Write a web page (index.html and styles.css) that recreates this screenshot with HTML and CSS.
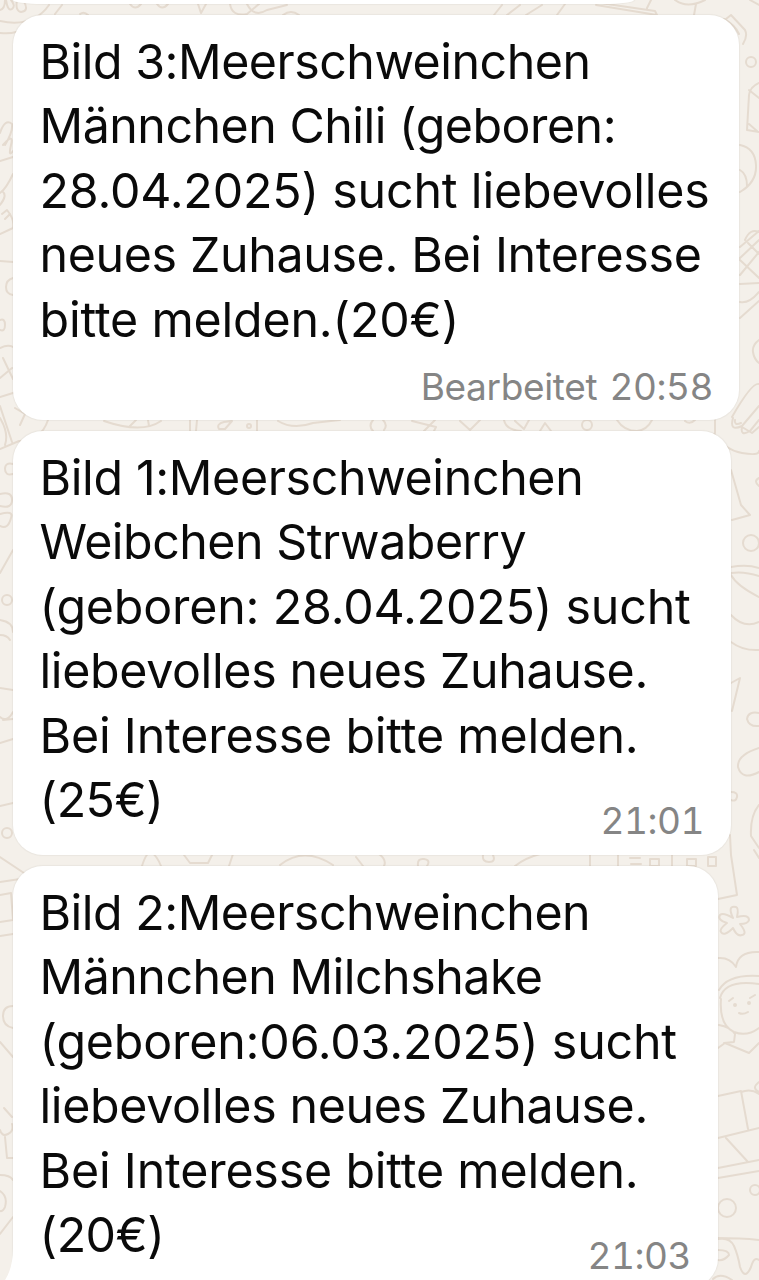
FILE: index.html
```
<!DOCTYPE html>
<html lang="de">
  <head>
    <meta charset="utf-8" />
    <title>Chat</title>
    <link rel="stylesheet" href="styles.css">
  </head>

  <body>
    <svg class="wallpaper" viewBox="0 0 759 1280" aria-hidden="true">
      <!-- left edge -->
      <path d="M0 10Q5 9 5 0M6 0Q8 12 12 9T11 0M17 0Q15 11 21 12Q30 11 23 0M0 21Q33 28 49 5M0 33Q10 34 16 32M55 14L62 5" />
      <path d="M0 133Q5 118 12 124Q13 132 5 145M3 145Q14 132 11 145T13 151M0 161L13 157M13 174Q6 189 0 193M0 205Q8 195 2 191M2 214L7 210Q15 220 13 228L0 234M5 219L10 214M0 261L13 262M13 278Q6 280 6 287Q6 294 13 295M0 320Q5 318 5 325T0 330" />
      <path d="M0 348Q8 344 13 347M3 358L13 379M0 378L12 368M0 397L13 393M0 406L12 442M0 418Q9 433 5 445M0 449L19 441Q41 441 48 420M15 408L25 414L20 425M13 464Q5 462 5 469T13 474M0 494Q12 491 12 500T0 506M0 514Q14 510 11 518Q8 530 0 526M0 573L13 550M0 620Q13 622 13 632M0 635Q7 635 10 640" />
      <circle cx="7" cy="600" r="5" />
      <path d="M0 688L13 690M0 717Q7 723 13 712M3 720L13 719M0 743L13 739M0 806L13 803M0 857L24 873M0 882L20 879M0 895L11 893L13 920L0 922M0 936L13 934M13 1006Q3 1006 3 1016T13 1028M0 1042L13 1057M4 1108L12 1117M0 1130Q2 1137 8 1134T12 1124M5 1137L7 1158L13 1158M0 1175Q10 1175 13 1180M0 1191Q8 1196 5 1207Q3 1212 0 1211M0 1234L13 1217" />
      <circle cx="7" cy="833" r="5" />

      <!-- between the bubbles -->
      <path d="M80 14Q84 11 88 15M130 4Q135 11 141 4M157 4Q162 11 168 4M198 4L201 13L206 4M230 4Q232 17 247 14L259 4M247 4Q254 18 267 10L287 5M283 15Q291 9 299 15M494 15L502 5M507 15L520 5M526 15L542 5M557 15L565 4M596 5L657 15L655 11L600 3M647 8L651 0" />
      <path d="M104 421Q142 434 161 421M130 426L136 420M148 420L149 426M190 420V431M197 420L196 431M219 429Q216 424 224 422L232 421L225 429ZM257 420V431M278 421Q293 430 313 423L340 420M373 420Q368 426 373 431M383 420Q388 425 384 430M412 421L436 427L434 431M435 420L424 431M460 421L470 430L480 420M504 420Q506 430 521 431M515 421L524 429L529 420M540 431L545 423L551 431M617 420Q624 431 637 431Q647 430 652 420M685 421Q690 425 695 420" />
      <circle cx="249" cy="426" r="2" /><circle cx="587" cy="425" r="5" />
      <path d="M142 866Q147 850 152 853T161 866M184 855L190 863H208L212 855M229 866L233 854M280 865Q304 846 333 865M356 857L363 866M379 854Q387 860 384 866M418 866Q417 858 424 859T427 866M483 855Q482 862 489 862T493 855M515 866Q525 858 540 854M590 855V866M618 855V866M630 858H640M631 864H641M650 859H659V866H650ZM672 855V866M687 859H696V866H687ZM708 857H716V866H708Z" />

      <!-- right edge -->
      <path d="M675 0Q687 9 705 0M694 15L696 4M726 19L731 15L745 30Q748 36 743 44M724 19Q735 25 739 34M750 0L759 5M759 83Q750 87 749 95L747 130L759 132M749 124L757 131M749 90L759 98M740 145Q755 148 756 165T740 192M740 170Q747 174 747 186" />
      <circle cx="751" cy="62" r="5" />
      <path d="M745 240Q750 228 759 232M740 247L759 231M740 258L759 240M740 260L759 278M748 243L759 254M740 275L759 252M740 284L759 283M740 302Q749 304 759 292M740 318L759 301M759 340Q752 345 753 352T759 363M732 417Q752 382 759 384M733 418Q729 432 742 426L759 406M742 427Q740 437 750 431L759 420M715 420V433M714 434Q725 450 742 453T759 451M735 420Q734 426 741 423M742 427L752 433L759 427M731 470L741 505L750 515L732 520M759 478Q753 481 759 486" />
      <circle cx="751" cy="543" r="8" />
      <path d="M731 567Q747 564 759 568M731 573Q744 571 759 576M731 575Q737 586 759 597M731 615Q744 629 759 622M731 642Q743 651 759 650M731 683L740 678L732 711M759 713Q748 711 747 719Q749 727 759 726M759 748Q737 755 738 767Q742 781 759 772M731 792Q738 792 737 797T731 800M759 805Q750 816 751 836L759 848M730 835L731 855M731 855L737 895L718 899M754 850L759 858" />
      <path d="M733 918Q727 905 736 907Q739 908 737 917Q749 914 749 920Q748 924 740 924Q748 934 742 935Q737 937 733 928Q724 937 721 932Q719 929 727 923Q717 920 720 915Q723 912 733 918Z" />
      <path d="M718 958Q730 957 736 967Q738 951 759 952M719 990Q728 974 759 976M720 998Q725 979 759 984M721 999Q719 1025 734 1032Q747 1037 759 1028M729 1001L733 998M750 998L755 995M739 1013Q743 1015 748 1012M719 1025Q730 1027 735 1034L734 1042L724 1043M718 1048L725 1043L749 1053L759 1043M718 1096L741 1091L748 1129M741 1092Q751 1088 759 1094M759 1082Q751 1088 759 1092M718 1138L759 1128M726 1138L748 1162M718 1168L759 1160M718 1178L759 1171" />
      <circle cx="735" cy="1005" r="1" /><circle cx="749" cy="1003" r="1" />
      <circle cx="727" cy="1208" r="9" /><circle cx="755" cy="1190" r="5" />
      <path d="M718 1239Q730 1237 734 1246Q738 1255 740 1267Q745 1281 751 1267Q754 1256 759 1260M718 1238Q740 1238 759 1240M718 1250Q729 1250 729 1255Q724 1261 718 1260M713 1279Q720 1272 732 1280" />
    </svg>

    <main class="chat">
      <div class="bubble bubble-previous"></div>

      <div class="bubble bubble-chili">
        <p class="text">
          <span class="line">Bild 3:Meerschweinchen</span>
          <span class="line">Männchen Chili (geboren:</span>
          <span class="line line-wide">28.04.2025) sucht liebevolles</span>
          <span class="line line-loose">neues Zuhause. Bei Interesse</span>
          <span class="line line-wide">bitte melden.(20€)</span>
        </p>
        <div class="meta"><span class="edited">Bearbeitet</span> <span class="time">20:58</span></div>
      </div>

      <div class="bubble bubble-strawberry">
        <p class="text">
          <span class="line line-loose">Bild 1:Meerschweinchen</span>
          <span class="line">Weibchen Strwaberry</span>
          <span class="line line-wide">(geboren: 28.04.2025) sucht</span>
          <span class="line line-loose">liebevolles neues Zuhause.</span>
          <span class="line line-wide">Bei Interesse bitte melden.</span>
          <span class="line">(25€)</span>
        </p>
        <div class="meta meta-inline"><span class="time">21:01</span></div>
      </div>

      <div class="bubble bubble-milchshake">
        <p class="text">
          <span class="line">Bild 2:Meerschweinchen</span>
          <span class="line">Männchen Milchshake</span>
          <span class="line line-wide">(geboren:06.03.2025) sucht</span>
          <span class="line line-loose">liebevolles neues Zuhause.</span>
          <span class="line line-wide">Bei Interesse bitte melden.</span>
          <span class="line">(20€)</span>
        </p>
        <div class="meta meta-inline"><span class="time">21:03</span></div>
        <svg class="tail" viewBox="0 0 20 40" aria-hidden="true">
          <path d="M10 0Q10 22 0 35V40H20V0Z" />
        </svg>
      </div>
    </main>
  </body>
</html>
```
FILE: styles.css
```
* {
  box-sizing: border-box;
}

body {
  margin: 0;
  height: 1280px;
  overflow: hidden;
  position: relative;
  background-color: #f4f0ea;
  font-family: Inter, "Liberation Sans", sans-serif;
  color: #0a0a0a;
}

.wallpaper {
  position: absolute;
  top: 0;
  left: 0;
  width: 759px;
  height: 1280px;
  fill: none;
  stroke: #e5dbd0;
  stroke-width: 2;
  stroke-linecap: round;
  stroke-linejoin: round;
}

.chat {
  position: relative;
  height: 1280px;
  padding-left: 13px;
  display: flex;
  flex-direction: column;
  align-items: flex-start;
  gap: 11px;
}

.bubble {
  position: relative;
  flex: none;
  display: flex;
  flex-direction: column;
  padding: 15px 26px 0 26.5px;
  background-color: #fff;
  border-radius: 30px;
  box-shadow: 0 0 1px 1px rgba(90, 80, 60, 0.06);
}

.bubble-previous {
  width: 621px;
  height: 4px;
  padding: 0;
  border-radius: 0 0 30px 30px / 0 0 4px 4px;
}

.bubble-chili {
  width: 726px;
  height: 405px;
}

.bubble-strawberry {
  width: 718px;
  height: 424px;
}

.bubble-milchshake {
  width: 705px;
  height: 422px;
}

.text {
  margin: 0;
  font-size: 48.3px;
  line-height: 64.4px;
  letter-spacing: -0.48px;
}

.line {
  display: block;
  white-space: nowrap;
}

.line-loose {
  letter-spacing: -0.34px;
}

.line-wide {
  letter-spacing: -0.17px;
}

.meta {
  align-self: flex-end;
  margin-top: 12.5px;
  font-size: 37px;
  line-height: 44px;
  word-spacing: 2px;
  color: #858585;
  white-space: nowrap;
}

.edited {
  letter-spacing: -0.35px;
}

.time {
  font-variant-numeric: tabular-nums;
  letter-spacing: -0.5px;
}

/* time sits next to the last line of text */
.meta-inline {
  margin-top: -33px;
  margin-right: 1px;
}

.tail {
  position: absolute;
  left: -10px;
  bottom: 0;
  width: 20px;
  height: 40px;
  fill: #fff;
}
```
